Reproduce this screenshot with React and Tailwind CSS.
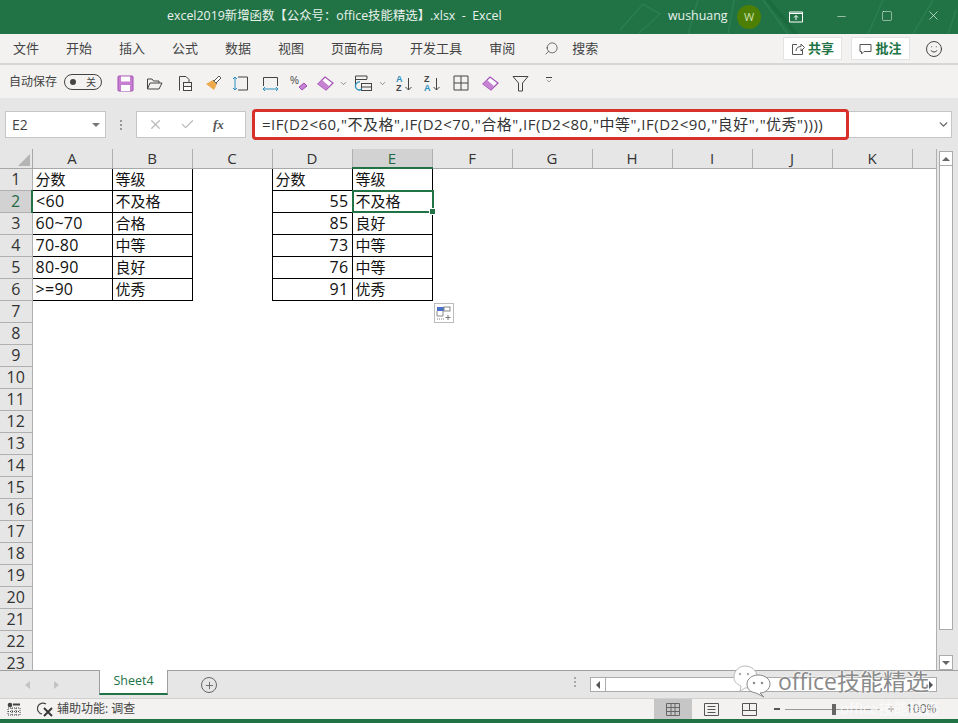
import React from "react"
import { ChevronDown, Search, X, Check, Minus, Square, Plus, Smile } from "lucide-react"

const cjk = "font-['Open_Sans','Noto_Sans_CJK_SC',sans-serif]"
const tabs = ["文件", "开始", "插入", "公式", "数据", "视图", "页面布局", "开发工具", "审阅"]
const columns = ["A", "B", "C", "D", "E", "F", "G", "H", "I", "J", "K"]
const rows = Array.from({ length: 23 }, (_, i) => i + 1)

const data = {
    A1: "分数", B1: "等级", D1: "分数", E1: "等级",
    A2: "<60", B2: "不及格", D2: "55", E2: "不及格",
    A3: "60~70", B3: "合格", D3: "85", E3: "良好",
    A4: "70-80", B4: "中等", D4: "73", E4: "中等",
    A5: "80-90", B5: "良好", D5: "76", E5: "中等",
    A6: ">=90", B6: "优秀", D6: "91", E6: "优秀",
}

const Icon = ({ w = 18, h = 18, children, className = "" }) => (
    <svg width={w} height={h} viewBox={`0 0 ${w} ${h}`} fill="none" className={`shrink-0 ${className}`}>
        {children}
    </svg>
)

const Eraser = () => (
    <Icon w={17} h={17}>
        <path d="M1 9 L8 2 L16 8 L9 15 Z" fill="#fff" stroke="#a24fb3" strokeWidth="1.2" />
        <path d="M1 9 L5 5 L12 11 L9 15 Z" fill="#c583d2" />
    </Icon>
)

const Toolbar = () => (
    <div className={`flex items-center h-[33px] bg-[#f3f2f1] pl-[9px] pt-[1px] ${cjk}`}>
        <span className="text-[12px] text-[#444] w-[48px] whitespace-nowrap">自动保存</span>
        <div className="ml-[7px] w-[38px] h-[16px] rounded-full border border-[#444] flex items-center justify-between px-[5px]">
            <span className="w-[6px] h-[6px] rounded-full bg-[#444]" />
            <span className="text-[10px] leading-none text-[#444]">关</span>
        </div>
        <div className="ml-[15px] mt-[2px] flex items-center">
            <Icon w={17} h={17}>
                <rect x="1" y="1" width="15" height="15" rx="1" fill="#c77fd1" stroke="#a24fb3" />
                <rect x="4" y="1.5" width="9" height="5" fill="#fff" />
                <rect x="4" y="10" width="9" height="6" fill="#fff" />
            </Icon>
            <Icon w={17} h={17} className="ml-[12px]">
                <path d="M1.5 14 V4 H6 L7.5 6 H13 V8 M1.5 14 L4 8 H16 L13 14 Z" stroke="#444" />
            </Icon>
            <Icon w={16} h={17} className="ml-[14px]">
                <path d="M2.5 15.5 V1.5 H9 L12 4.5 V7" stroke="#444" />
                <rect x="6.5" y="7.5" width="8" height="4" stroke="#444" />
                <rect x="6.5" y="11.5" width="8" height="4" stroke="#444" fill="#fff" />
            </Icon>
            <Icon w={18} h={18} className="ml-[11px]">
                <path d="M10 7 L15 2 L17 4 L12 9 Z" fill="#fff" stroke="#555" />
                <path d="M9 6 L13 10 L10 16 L2 10 Z" fill="#eea94c" />
                <path d="M9 6 L13 10" stroke="#666" />
            </Icon>
            <Icon w={17} h={17} className="ml-[10px]">
                <path d="M6 2 H15.5 V15 H6" stroke="#444" />
                <path d="M3 2 V15 M1 4 L3 2 L5 4 M1 13 L3 15 L5 13" stroke="#2a8fbd" />
            </Icon>
            <Icon w={17} h={17} className="ml-[13px]">
                <path d="M1.5 11 V2.5 H15.5 V11" stroke="#444" />
                <path d="M1 14 H16 M3 12 L1 14 L3 16 M14 12 L16 14 L14 16" stroke="#2a8fbd" />
            </Icon>
            <Icon w={18} h={17} className="ml-[11px]">
                <text x="0" y="9" fontSize="10" fill="#444" fontFamily="Liberation Sans">%</text>
                <path d="M9 12 L14 8 L17 11 L12 15 Z" fill="#c583d2" stroke="#a24fb3" />
            </Icon>
            <span className="ml-[9px] flex"><Eraser /></span>
            <ChevronDown size={9} strokeWidth={1.5} className="ml-[5px] text-[#444]" />
            <Icon w={19} h={18} className="ml-[6px]">
                <path d="M1.5 12 V2 H13 V5 M1.5 5.5 H13" stroke="#444" />
                <rect x="7.5" y="9.5" width="10" height="7" stroke="#444" fill="#f3f2f1" />
                <path d="M7.5 13 H17.5" stroke="#444" />
                <path d="M6 8 A4 4 0 1 0 8 15" stroke="#2a8fbd" strokeWidth="1.3" />
            </Icon>
            <ChevronDown size={9} strokeWidth={1.5} className="ml-[5px] text-[#444]" />
            <Icon w={17} h={18} className="ml-[9px]">
                <text x="0" y="8" fontSize="9" fontWeight="700" fill="#2a8fbd" fontFamily="Liberation Sans">A</text>
                <text x="0" y="17" fontSize="9" fontWeight="700" fill="#444" fontFamily="Liberation Sans">Z</text>
                <path d="M12.5 4 V16 M9.5 13 L12.5 16 L15.5 13" stroke="#444" />
            </Icon>
            <Icon w={17} h={18} className="ml-[11px]">
                <text x="0" y="8" fontSize="9" fontWeight="700" fill="#444" fontFamily="Liberation Sans">Z</text>
                <text x="0" y="17" fontSize="9" fontWeight="700" fill="#2a8fbd" fontFamily="Liberation Sans">A</text>
                <path d="M12.5 4 V16 M9.5 13 L12.5 16 L15.5 13" stroke="#444" />
            </Icon>
            <Icon w={16} h={16} className="ml-[12px]">
                <path d="M1 1 H15 V15 H1 Z M8 1 V15 M1 8 H15" stroke="#444" />
            </Icon>
            <span className="ml-[13px] flex"><Eraser /></span>
            <Icon w={17} h={17} className="ml-[13px]">
                <path d="M1 1.5 H16 L10.5 8 V16 H6.5 V8 Z" stroke="#444" />
            </Icon>
            <div className="ml-[16px] -mt-[4px] flex flex-col items-center">
                <span className="w-[6px] h-px bg-[#444] mb-[1px]" />
                <ChevronDown size={8} strokeWidth={1.5} className="text-[#444] -mt-[2px]" />
            </div>
        </div>
    </div>
)

const FormulaBar = () => (
    <div className={`flex items-center h-[51px] bg-[#e6e6e6] pl-[5px] pr-[6px] pt-[2px] ${cjk}`}>
        <div className="w-[101px] h-[27px] bg-white border border-[#c6c6c6] flex items-center justify-between pl-[6px] pr-[5px]">
            <span className="text-[14px] text-[#444]">E2</span>
            <span className="w-0 h-0 border-x-[4px] border-x-transparent border-t-[4px] border-t-[#777]" />
        </div>
        <div className="w-[30px] flex flex-col items-center gap-[2px]">
            <span className="w-[2px] h-[2px] bg-[#999]" />
            <span className="w-[2px] h-[2px] bg-[#999]" />
            <span className="w-[2px] h-[2px] bg-[#999]" />
        </div>
        <div className="w-[110px] h-[27px] bg-white border border-[#c6c6c6] flex items-center pl-[11px] gap-[17px]">
            <X size={15} strokeWidth={2} className="text-[#bbb]" />
            <Check size={15} strokeWidth={2} className="text-[#bbb]" />
            <span className="text-[13px] italic font-bold font-['Liberation_Serif',serif] text-[#555] ml-[1px]">fx</span>
        </div>
        <div className="relative flex-1 ml-[6px] h-[27px] bg-white border border-[#c6c6c6] flex items-center">
            <span className="pl-[9px] text-[15px] tracking-[0.5px] text-[#333] whitespace-nowrap">=IF(D2&lt;60,"不及格",IF(D2&lt;70,"合格",IF(D2&lt;80,"中等",IF(D2&lt;90,"良好","优秀"))))</span>
            <ChevronDown size={13} strokeWidth={2.5} className="absolute right-[1px] top-[6px] text-[#666]" />
            <div className="absolute left-[-1px] top-[-3px] w-[597px] h-[31px] border-[3px] border-[#d8312a] rounded-[4px]" />
        </div>
    </div>
)

const Sheet = () => (
    <div className={`flex h-[521px] bg-white overflow-hidden ${cjk}`}>
        <div className="relative w-[936px] shrink-0 overflow-hidden">
            <table className="border-collapse table-fixed w-[936px]">
                <colgroup>
                    <col className="w-[32px]" />
                    {columns.map((c) => <col key={c} className="w-[80px]" />)}
                    <col />
                </colgroup>
                <thead>
                    <tr className="h-[19px]">
                        <th className="bg-[#e6e6e6] border-r border-b border-[#a8a8a8] relative p-0">
                            <span className="absolute right-[2px] bottom-[2px] w-0 h-0 border-l-[12px] border-l-transparent border-b-[12px] border-b-[#b4b4b4]" />
                        </th>
                        {columns.map((c) => (
                            <th
                                key={c}
                                className={`p-0 font-normal text-[15px] leading-none border-r border-[#b0b0b0] ${c === "E" ? "bg-[#d2d2d2] text-[#1f6b45] border-b-2 border-b-[#217346]" : "bg-[#e6e6e6] text-[#333] border-b border-b-[#a8a8a8]"}`}
                            >
                                {c}
                            </th>
                        ))}
                        <th className="bg-[#e6e6e6] border-b border-[#a8a8a8] p-0" />
                    </tr>
                </thead>
                <tbody>
                    {rows.map((r) => (
                        <tr key={r} className="h-[22px]">
                            <td className={`p-0 text-center text-[16px] leading-none border-r border-b border-[#b0b0b0] ${r === 2 ? "bg-[#d2d2d2] text-[#1f6b45] border-r-2 border-r-[#217346]" : "bg-[#e6e6e6] text-[#333]"}`}>
                                {r}
                            </td>
                            {columns.map((c) => {
                                const value = data[c + r]
                                const numeric = c === "D" && r > 1
                                const latin = value && /^[\x00-\x7f]+$/.test(value)
                                const boxed = r <= 6 && ["A", "B", "D", "E"].includes(c)
                                return (
                                    <td
                                        key={c}
                                        className={`p-0 px-[3px] leading-none text-[#111] whitespace-nowrap ${latin ? "text-[16px] tracking-[0.3px]" : "text-[15px]"} ${numeric ? "text-right" : "text-left"} ${boxed ? "border border-black" : ""}`}
                                    >
                                        {value}
                                    </td>
                                )
                            })}
                            <td />
                        </tr>
                    ))}
                </tbody>
            </table>
            {/* selected cell E2 */}
            <div className="absolute left-[352px] top-[41px] w-[82px] h-[23px] border-2 border-[#217346]">
                <span className="absolute right-[-4px] bottom-[-4px] w-[5px] h-[5px] bg-[#217346] border border-white box-content" />
            </div>
            {/* paste options */}
            <div className="absolute left-[434px] top-[154px] w-[20px] h-[20px] bg-white border border-[#bbb] flex items-center justify-center">
                <Icon w={16} h={15}>
                    <rect x="1" y="1" width="7" height="4" fill="#4a70c9" />
                    <rect x="8" y="1" width="6" height="4" stroke="#888" />
                    <path d="M1 5 V10 H7 V5" stroke="#888" />
                    <path d="M1 13 H8" stroke="#888" strokeDasharray="1 1" />
                    <path d="M12 9 V14 M9.5 11.5 H14.5" stroke="#777" />
                </Icon>
            </div>
        </div>
        {/* vertical scrollbar */}
        <div className="w-[22px] bg-[#e6e6e6] border-l border-[#b0b0b0] flex flex-col pl-[2px] pr-[5px] pt-[2px]">
            <div className="h-[15px] bg-white border border-[#ababab] flex items-center justify-center">
                <span className="w-0 h-0 border-x-[4px] border-x-transparent border-b-[4px] border-b-[#666]" />
            </div>
            <div className="h-[465px] bg-white border border-[#ababab] -mt-px" />
            <div className="flex-1" />
            <div className="h-[15px] bg-white border border-[#ababab] flex items-center justify-center">
                <span className="w-0 h-0 border-x-[4px] border-x-transparent border-t-[4px] border-t-[#666]" />
            </div>
        </div>
    </div>
)

const SheetTabs = () => (
    <div className={`relative flex items-start h-[28px] bg-[#e6e6e6] border-t border-[#9f9f9f] ${cjk}`}>
        <div className="flex items-center h-[27px] w-[99px] pl-[25px] gap-[24px]">
            <span className="w-0 h-0 border-y-[4px] border-y-transparent border-r-[5px] border-r-[#c2c2c2]" />
            <span className="w-0 h-0 border-y-[4px] border-y-transparent border-l-[5px] border-l-[#c2c2c2]" />
        </div>
        <div className="-mt-px w-[69px] h-[25px] bg-white border-x border-[#9f9f9f] border-b-2 border-b-[#217346] flex items-center justify-center text-[12.5px] text-[#217346]">
            Sheet4
        </div>
        <div className="ml-[33px] mt-[6px] w-[16px] h-[16px] rounded-full border border-[#666] flex items-center justify-center">
            <Plus size={11} strokeWidth={2} className="text-[#666]" />
        </div>
        <div className="ml-[357px] mt-[6px] flex flex-col gap-[2px]">
            <span className="w-[2px] h-[2px] bg-[#aaa]" />
            <span className="w-[2px] h-[2px] bg-[#aaa]" />
            <span className="w-[2px] h-[2px] bg-[#aaa]" />
        </div>
        <div className="ml-[14px] mt-[6px] w-[347px] h-[15px] bg-[#e6e6e6] border border-[#ababab] flex items-center">
            <div className="w-[15px] h-full bg-white flex items-center justify-center border-r border-[#ababab]">
                <span className="w-0 h-0 border-y-[4px] border-y-transparent border-r-[4px] border-r-[#555]" />
            </div>
            <div className="flex-1 h-full bg-white" />
            <div className="w-[10px] h-full bg-white flex items-center justify-center">
                <span className="w-0 h-0 border-y-[4px] border-y-transparent border-l-[4px] border-l-[#555]" />
            </div>
        </div>
    </div>
)

const StatusBar = () => (
    <div className={`flex items-center h-[21px] bg-[#f3f2f1] border-t border-[#d0d0d0] ${cjk}`}>
        <Icon w={14} h={14} className="ml-[7px]">
            <circle cx="3" cy="3" r="2.3" fill="#444" />
            <rect x="6" y="1.5" width="7" height="2" fill="#444" />
            <path d="M1 6 H13 V13 H1 Z M1 9.5 H13 M5 6 V13 M9 6 V13" stroke="#444" strokeDasharray="1 1" />
        </Icon>
        <Icon w={18} h={15} className="ml-[16px]">
            <path d="M9 2 A5.5 5.5 0 1 0 5 12" stroke="#444" strokeWidth="1.2" />
            <path d="M7 6 L15 14 M15 6 L7 14" stroke="#333" strokeWidth="1.8" />
        </Icon>
        <span className="ml-[2px] text-[12px] text-[#444] whitespace-nowrap">辅助功能: 调查</span>
        <div className="flex-1" />
        <div className="flex items-center h-full">
            <div className="w-[38px] h-full bg-[#c6c6c6] flex items-center justify-center">
                <Icon w={14} h={13}>
                    <path d="M.5 .5 H13.5 V12.5 H.5 Z M.5 4.5 H13.5 M.5 8.5 H13.5 M5 .5 V12.5 M9 .5 V12.5" stroke="#666" />
                </Icon>
            </div>
            <Icon w={15} h={13} className="ml-[12px]">
                <path d="M.5 .5 H14.5 V12.5 H.5 Z" stroke="#555" />
                <path d="M3.5 3.5 H11.5 M3.5 6.5 H11.5 M3.5 9.5 H11.5" stroke="#555" />
            </Icon>
            <Icon w={15} h={13} className="ml-[23px]">
                <path d="M.5 .5 H14.5 V12.5 H.5 Z M.5 7.5 H14.5 M7.5 .5 V7.5" stroke="#555" />
            </Icon>
        </div>
        <span className="ml-[17px] w-[6px] h-[2px] bg-[#555]" />
        <div className="relative ml-[5px] w-[95px] h-px bg-[#999]">
            <span className="absolute left-[47px] top-[-5px] w-[4px] h-[11px] bg-[#666]" />
        </div>
        <Plus size={8} strokeWidth={2} className="ml-[7px] text-[#555]" />
        <span className="ml-[11px] mr-[20px] w-[32px] text-[12px] text-[#666]">100%</span>
    </div>
)

const App = () => {
    return (
        <div className={`relative w-[958px] h-[723px] overflow-hidden flex flex-col bg-[#e6e6e6] ${cjk}`}>
            {/* title bar */}
            <div className="relative h-[34px] bg-[#217346] text-white flex items-center overflow-hidden">
                <svg className="absolute right-0 top-0" width="420" height="34" fill="none" stroke="#2b7e52" strokeWidth="1.5">
                    <path d="M82 30 L105 4 L122 14 L100 34 M160 0 L150 34 L190 34 L196 0 M225 0 L250 34 M330 34 L345 0 M395 0 L375 34 M410 34 L418 10" />
                    <path d="M230 0 L258 34" strokeWidth="4" stroke="#1c6a3f" />
                </svg>
                <span className="absolute left-[167px] top-[7px] text-[12.4px] leading-[18px] whitespace-pre text-[#e9f2ec]">excel2019新增函数【公众号：office技能精选】.xlsx  -  Excel</span>
                <span className="absolute left-[668px] top-[7px] text-[12.4px] leading-[18px] text-[#e9f2ec]">wushuang</span>
                <div className="absolute left-[737px] top-[5px] w-[24px] h-[24px] rounded-full bg-[#4d7f05] flex items-center justify-center text-[11px] text-[#cfe0b0]">W</div>
                <Icon w={14} h={13} className="absolute left-[789px] top-[10px]">
                    <path d="M.5 2 H13.5 V12 H.5 Z M.5 3.5 H13.5 M7 10 V5.5 M5 7.5 L7 5.5 L9 7.5" stroke="#fff" />
                </Icon>
                <Minus size={13} strokeWidth={1} className="absolute left-[835px] top-[10px] text-white" />
                <Square size={12} strokeWidth={1} className="absolute left-[881px] top-[10px] text-white" />
                <X size={15} strokeWidth={1} className="absolute left-[926px] top-[8px] text-white" />
            </div>
            {/* ribbon tabs */}
            <div className="flex items-center h-[31px] bg-[#f3f2f1] border-b-2 border-[#d6d6d6] pl-[13px] gap-[27px] text-[13px] text-[#444]">
                {tabs.map((t) => <span key={t}>{t}</span>)}
                <Search size={15} strokeWidth={1.2} className="ml-[2px] -scale-x-100 text-[#444]" />
                <span className="-ml-[14px]">搜索</span>
                <div className="ml-auto flex items-center pr-[15px]">
                    <div className="w-[59px] h-[23px] bg-white border border-[#e3e3e3] flex items-center justify-center gap-[3px] font-bold text-[#217346] text-[13px]">
                        <Icon w={14} h={13}>
                            <path d="M6 2.5 H1.5 V12.5 H11.5 V8 M5 9 C5 6 7 4.5 10 4.5 V2 L13.5 5.5 L10 9 V6.5" stroke="#555" />
                        </Icon>
                        共享
                    </div>
                    <div className="ml-[9px] w-[59px] h-[23px] bg-white border border-[#e3e3e3] flex items-center justify-center gap-[3px] font-bold text-[#217346] text-[13px]">
                        <Icon w={13} h={12}>
                            <path d="M1 1.5 H12 V8.5 H5 L2.5 11 V8.5 H1 Z" stroke="#555" />
                        </Icon>
                        批注
                    </div>
                    <Smile size={18} strokeWidth={1.2} className="ml-[15px] text-[#333]" />
                </div>
            </div>
            <Toolbar />
            <FormulaBar />
            <Sheet />
            <SheetTabs />
            <StatusBar />
            <div className="flex-1 bg-[#217346]" />
            {/* watermark */}
            <div className="absolute left-[733px] top-[664px] flex items-center pointer-events-none">
                <Icon w={40} h={34}>
                    <path d="M12 2 C19 2 24 7 24 13 C24 19 19 24 12 24 L7 27 L8 22 C3 20 1 17 1 13 C1 7 6 2 12 2 Z" fill="#fff" stroke="#bbb" />
                    <path d="M25 11 C32 11 37 15 37 20 C37 25 32 29 27 29 L31 33 L23 29 C17 28 14 25 14 20 C14 15 19 11 25 11 Z" fill="#fff" stroke="#888" />
                    <circle cx="7" cy="10" r="1.2" fill="#aaa" />
                    <circle cx="15" cy="10" r="1.2" fill="#aaa" />
                    <circle cx="21" cy="19" r="1.2" fill="#888" />
                    <circle cx="29" cy="19" r="1.2" fill="#888" />
                </Icon>
                <span className="ml-[5px] text-[23px] leading-none text-[#8a8a8a] whitespace-nowrap [text-shadow:0_0_2px_#fff,0_0_2px_#fff]">office技能精选</span>
            </div>
            <span className="absolute left-[840px] top-[698px] text-[15px] leading-[20px] text-white/70 whitespace-nowrap pointer-events-none">office技能精选</span>
        </div>
    )
}

export default App
